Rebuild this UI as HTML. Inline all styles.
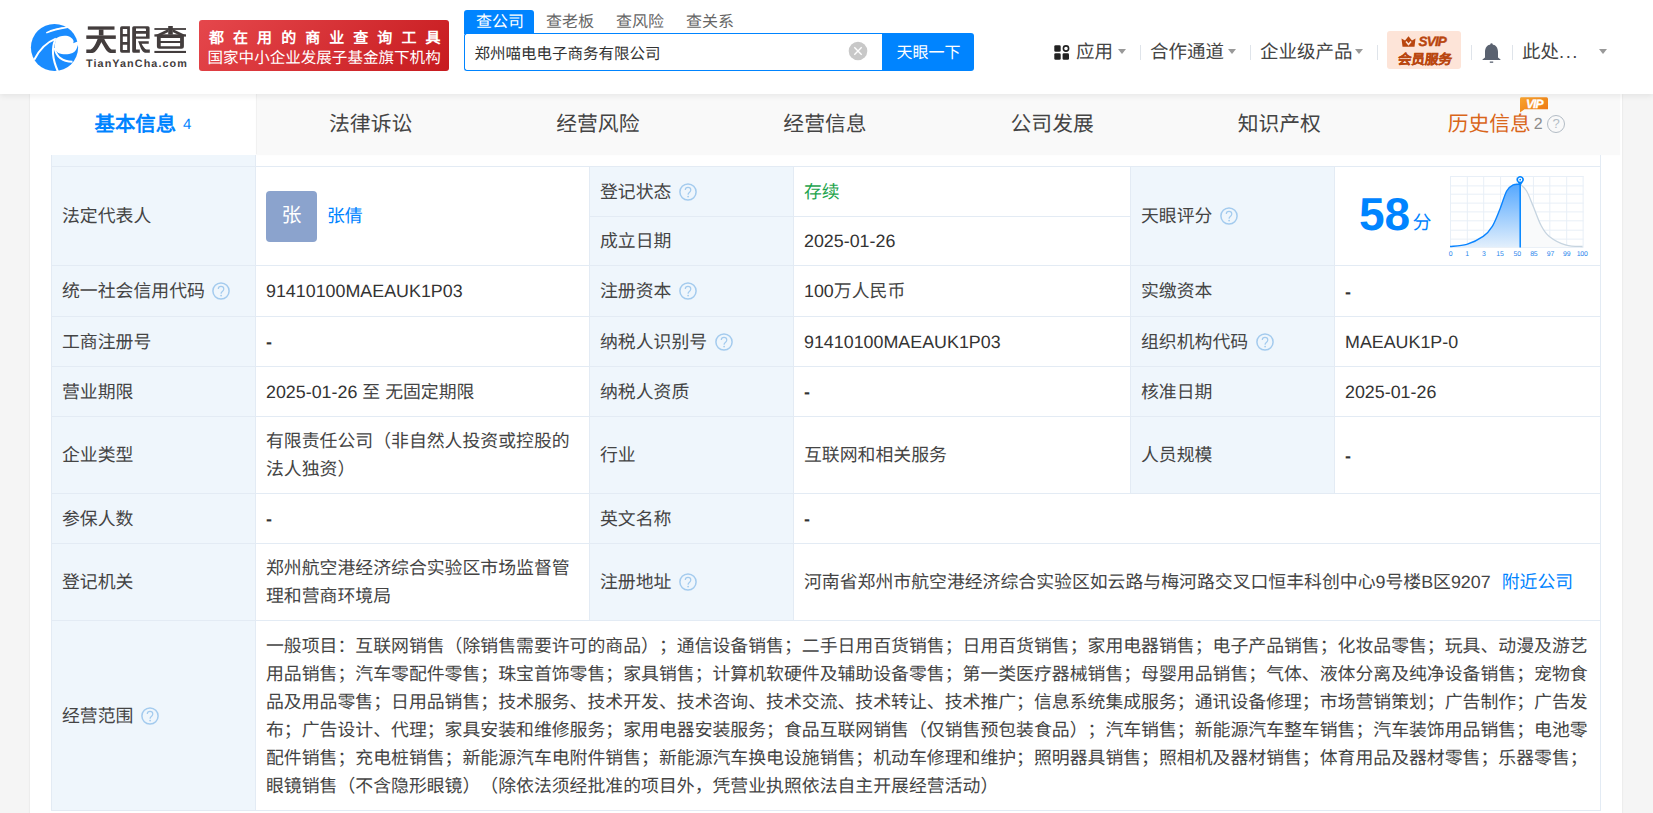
<!DOCTYPE html>
<html lang="zh-CN"><head><meta charset="utf-8">
<style>
*{margin:0;padding:0;box-sizing:border-box}
html,body{width:1653px;height:813px;overflow:hidden}
body{background:#f5f5f5;font-family:"Liberation Sans",sans-serif;color:#333;position:relative;text-rendering:geometricPrecision;text-spacing-trim:space-all}
.abs{position:absolute}
.nw{white-space:nowrap}
#hdr{position:absolute;left:0;top:0;width:1653px;height:94px;background:#fff;box-shadow:0 2px 6px rgba(0,0,0,.075);z-index:5}
#wrap{position:absolute;left:30px;top:94px;width:1592px;height:740px;background:#fff;box-shadow:0 0 2px rgba(0,0,0,.10)}
.tab{position:absolute;top:95px;height:60px;text-align:center;font-size:20.8px;line-height:60px;color:#444;white-space:nowrap}
.c{position:absolute;display:flex;align-items:center;padding:0 10px;font-size:17.87px;line-height:28px;color:#444}
.lab{background:#eff6fc}
.hl{position:absolute;height:1px;background:#e3ebf4}
.vl{position:absolute;width:1px;background:#e3ebf4}
.qi{flex:none;margin-left:6.5px;position:relative;top:0px}
.q{display:inline-block;width:18px;height:18px;border:1.3px solid #a9cdef;border-radius:50%;color:#a9cdef;font-size:13px;line-height:15.5px;text-align:center;margin-left:6px}
.tri{position:absolute;width:0;height:0;border-left:4.8px solid transparent;border-right:4.8px solid transparent;border-top:5.3px solid #999}
.sep{position:absolute;width:1px;height:15px;background:#dfe4ea;top:45px}
.nav{position:absolute;top:38.5px;font-size:18.5px;line-height:26px;color:#444;white-space:nowrap}
</style></head><body>
<div id="hdr">
  <svg class="abs" style="left:28px;top:20px" width="54" height="54" viewBox="0 0 54 54">
    <circle cx="26.5" cy="27.5" r="23.6" fill="#1a8cff"/>
    <path d="M27.9,18.6 C31,16 38,14.5 42.5,17.3 C45.5,19 46.2,21.5 45.2,23.2 L52,20.5 L52,26 L49.8,25.2 C49,29 47.5,31.5 44.5,33 C40,34.8 34,34.5 30.2,32.9 C27.8,31.5 26.4,29 26.6,26.6 Z" fill="#fff"/>
    <path d="M6.2,39.8 C11,30 18,22.5 27.9,18.6" stroke="#fff" stroke-width="2" fill="none"/>
    <path d="M27.2,19.9 C24,27 23.5,37 29.9,51.5" stroke="#fff" stroke-width="2" fill="none"/>
    <path d="M26.6,27.9 C28,36 34,41.5 44.5,41.8" stroke="#fff" stroke-width="2" fill="none"/>
    <path d="M18.3,12.9 C24,9.5 31,7.6 39.8,7.3 C31,8.8 24,10.5 18.3,12.9 Z" stroke="#fff" stroke-width="1.3" fill="#fff"/>
  </svg>
  <svg class="abs" style="left:0;top:0" width="200" height="80" viewBox="0 0 200 80"><g fill="#433d3d">
<rect x="87.8" y="26.4" width="26.7" height="3.3"/>
<rect x="86.3" y="35.4" width="29.5" height="3.5"/>
<rect x="98.85" y="29.5" width="4.6" height="6"/>
<path d="M97.8,38.6 L101.8,38.6 L101.6,41.7 C99.7,45.5 97.6,49.2 95.6,51.3 C94.6,52.4 93.5,53 92.4,53 L86.3,53 L86.3,49.6 L90.6,49.6 C92.8,48.8 95,45.8 97.8,38.6 Z"/>
<path d="M100.8,38.6 L104,38.6 C106,42.5 109,48 111.6,49.6 L115.8,49.6 L115.8,53 L110.3,53 C108.2,52.7 106.6,50.8 105.1,48.5 C103.6,46 102.2,43.6 100.8,41.2 Z"/>
<path fill-rule="evenodd" d="M121.8,26.2 L129.9,26.2 L129.9,52.75 L121.8,52.75 Q120.1,52.75 120.1,51 L120.1,28 Q120.1,26.2 121.8,26.2 Z M122.8,28.9 L127.2,28.9 L127.2,33.9 L122.8,33.9 Z M122.8,36.6 L127.2,36.6 L127.2,41.9 L122.8,41.9 Z M122.8,44.8 L127.2,44.8 L127.2,50 L122.8,50 Z"/>
<path fill-rule="evenodd" d="M133.8,26.2 L148,26.2 Q149.6,26.2 149.6,27.8 L149.6,38.7 L136,38.7 L136,49.4 L139.8,49.4 L139.8,52.75 L133.8,52.75 Q132.2,52.75 132.2,51.2 L132.2,27.8 Q132.2,26.2 133.8,26.2 Z M136,28.5 L145,28.5 Q146,28.5 146,29.6 L146,31 L136,31 Z M136,33.7 L146,33.7 L146,36.6 L136,36.6 Z"/>
<path d="M138.1,41.25 L148.75,41.25 L148.75,43.75 L141.6,43.75 C143,46.5 145,49.2 146.5,49.6 L149.8,49.6 L149.8,52.75 L145,52.75 C143.5,52.5 142.2,51 141,48.8 Z"/>
<rect x="168.2" y="26" width="4.6" height="8.6"/>
<rect x="154.4" y="28.1" width="31.6" height="1.8"/>
<path d="M168.4,29 L168.4,31.9 L160.6,35.8 L155.8,35 Z"/>
<path d="M172.6,29 L172.6,31.9 L180.4,35.8 L185.2,35 Z"/>
<rect x="154.4" y="34.3" width="31.6" height="2.3"/>
<path fill-rule="evenodd" d="M156.9,35.8 L183.9,35.8 L183.9,46.3 Q183.9,48.8 181.4,48.8 L159.4,48.8 Q156.9,48.8 156.9,46.3 Z M160.7,37.9 L180.1,37.9 L180.1,41 L160.7,41 Z M160.7,43.1 L180.1,43.1 L180.1,46.3 L160.7,46.3 Z"/>
<rect x="154.4" y="50.9" width="31.6" height="2.1"/>
</g></svg>
  <div class="abs nw" style="left:86px;top:57px;font-size:10.8px;font-weight:bold;color:#433d3d;line-height:14px;letter-spacing:1.08px">TianYanCha.com</div>
  <div class="abs" style="left:199px;top:20px;width:250px;height:51px;border-radius:3px;background:linear-gradient(135deg,#e5474c,#c71b1f)"></div>
  <div class="abs nw" style="left:209px;top:28.5px;font-size:15px;line-height:20px;color:#fff;font-weight:bold;letter-spacing:9.05px">都在用的商业查询工具</div>
  <div class="abs nw" style="left:207.5px;top:49px;font-size:15.55px;line-height:20px;color:#fff">国家中小企业发展子基金旗下机构</div>

  <div class="abs" style="left:464px;top:10px;width:70px;height:24px;background:#0084ff;border-radius:3px 3px 0 0"></div>
  <div class="abs nw" style="left:476px;top:11.5px;font-size:16px;line-height:22px;color:#fff">查公司</div>
  <div class="abs nw" style="left:546px;top:11.5px;font-size:16px;line-height:22px;color:#666">查老板</div>
  <div class="abs nw" style="left:616px;top:11.5px;font-size:16px;line-height:22px;color:#666">查风险</div>
  <div class="abs nw" style="left:686px;top:11.5px;font-size:16px;line-height:22px;color:#666">查关系</div>
  <div class="abs" style="left:464px;top:33px;width:420px;height:38px;border:1px solid #0084ff;border-right:none;border-radius:3px 0 0 3px"></div>
  <div class="abs nw" style="left:474.5px;top:43.5px;font-size:15.5px;line-height:22px;color:#333">郑州喵电电子商务有限公司</div>
  <svg class="abs" style="left:848px;top:41px" width="20" height="20" viewBox="0 0 20 20"><circle cx="10" cy="10" r="9.3" fill="#c8c8c8"/><path d="M6.3 6.3L13.7 13.7M13.7 6.3L6.3 13.7" stroke="#fff" stroke-width="1.4"/></svg>
  <div class="abs" style="left:882px;top:33px;width:92px;height:38px;background:#0084ff;border-radius:0 3px 3px 0"></div>
  <div class="abs nw" style="left:896.5px;top:42.5px;font-size:16px;line-height:22px;color:#fff">天眼一下</div>

  <svg class="abs" style="left:1054px;top:44.5px" width="16" height="15" viewBox="0 0 16 15">
    <rect x="0.3" y="0.3" width="6.4" height="6.4" rx="1.3" fill="#222"/>
    <circle cx="12" cy="3.5" r="2.6" fill="none" stroke="#222" stroke-width="1.6"/>
    <rect x="0.3" y="8.3" width="6.4" height="6.4" rx="1.3" fill="#222"/>
    <rect x="8.6" y="8.3" width="6.4" height="6.4" rx="1.3" fill="#222"/>
  </svg>
  <div class="nav" style="left:1076px">应用</div>
  <div class="tri" style="left:1117.5px;top:49px"></div>
  <div class="sep" style="left:1140px"></div>
  <div class="nav" style="left:1150px">合作通道</div>
  <div class="tri" style="left:1227.5px;top:49px"></div>
  <div class="sep" style="left:1250px"></div>
  <div class="nav" style="left:1260px">企业级产品</div>
  <div class="tri" style="left:1354.5px;top:49px"></div>
  <div class="sep" style="left:1377px"></div>
  <div class="abs" style="left:1387px;top:31px;width:74px;height:38px;background:#fde4d8;border-radius:3px"></div>
  <svg class="abs" style="left:1401px;top:36px" width="15" height="11" viewBox="0 0 15 11">
    <path d="M0.5,2.5 L4,4.5 L7.5,0.3 L11,4.5 L14.5,2.5 L13.5,10.7 L1.5,10.7 Z" fill="#b9460f"/>
    <path d="M5,5.5 L7.5,8.5 L10,5.5" stroke="#fde4d8" stroke-width="1.5" fill="none"/>
  </svg>
  <div class="abs nw" style="left:1418.5px;top:34px;font-size:13.5px;line-height:15px;color:#b9460f;font-weight:bold;font-style:italic;letter-spacing:-0.8px;-webkit-text-stroke:0.4px #b9460f">SVIP</div>
  <div class="abs nw" style="left:1396.5px;top:50.5px;font-size:13.5px;line-height:17px;color:#b9460f;font-weight:bold;-webkit-text-stroke:0.3px #b9460f;transform:skewX(-6deg);transform-origin:0 100%">会员服务</div>
  <div class="sep" style="left:1471px"></div>
  <svg class="abs" style="left:1482px;top:43px" width="19" height="20" viewBox="0 0 19 20">
    <circle cx="9.5" cy="1.5" r="1.2" fill="#5a6270"/>
    <path d="M9.5,1.5 C5,1.5 3,5 3,9 L3,14.5 L0.5,16.5 L0.5,17 L18.5,17 L18.5,16.5 L16,14.5 L16,9 C16,5 14,1.5 9.5,1.5 Z" fill="#5a6270"/>
    <rect x="7.8" y="18.5" width="3.4" height="1.3" fill="#5a6270"/>
  </svg>
  <div class="sep" style="left:1512px"></div>
  <div class="nav" style="left:1522px">此处<span style="letter-spacing:1.5px">...</span></div>
  <div class="tri" style="left:1599px;top:48.5px"></div>
</div>

<div id="wrap"></div>
<!-- tabs -->
<div class="abs" style="left:256px;top:94px;width:1364px;height:60px;background:#f9f9f9;border-left:1px solid #f1f1f1;box-shadow:0 1px 1px rgba(0,0,0,.025)"></div>
<div class="tab" style="left:30px;width:226px;color:#0084ff;font-weight:bold;font-size:20.4px">基本信息<span style="font-size:15px;font-weight:normal;margin-left:7px;position:relative;top:-2.5px">4</span></div>
<div class="tab" style="left:257.1px;width:227.1px">法律诉讼</div>
<div class="tab" style="left:484.3px;width:227.1px">经营风险</div>
<div class="tab" style="left:711.4px;width:227.1px">经营信息</div>
<div class="tab" style="left:938.6px;width:227.1px">公司发展</div>
<div class="tab" style="left:1165.7px;width:227.1px">知识产权</div>
<div class="tab" style="left:1392.9px;width:227.1px;color:#d9661a">历史信息<span style="font-size:16px;color:#8c8c8c;margin-left:3px;position:relative;top:-2.5px">2</span><span class="q" style="border-color:#b3bcc5;color:#b3bcc5;border-width:1.6px;vertical-align:middle;position:relative;top:-2px;margin-left:4.5px">?</span></div>
<svg class="abs" style="left:1519px;top:97px" width="30" height="16" viewBox="0 0 30 16">
  <defs><linearGradient id="vg" x1="0" y1="0" x2="1" y2="1"><stop offset="0" stop-color="#f9a52f"/><stop offset="1" stop-color="#ec7410"/></linearGradient></defs>
  <path d="M2,0.3 L27.5,0.3 Q29,0.3 29,2 L29,12.3 L5.5,12.3 L1,15.5 L1,2 Q1,0.3 2,0.3 Z" fill="url(#vg)"/>
  <text x="15.3" y="10.8" text-anchor="middle" font-family="Liberation Sans" font-size="12" font-weight="bold" font-style="italic" letter-spacing="-0.9" stroke="#fff" stroke-width="0.3" fill="#fff">VIP</text>
</svg>

<!-- table -->
<div class="abs lab" style="left:51px;top:155px;width:204px;height:11px"></div>
<div class="c lab" style="left:52px;top:167px;width:203px;height:98px">法定代表人</div>
<div class="c" style="left:256px;top:167px;width:333px;height:98px"><span style="display:inline-block;width:51px;height:51px;border-radius:4px;background:#8ba3cd;color:#fff;font-size:20px;line-height:51px;text-align:center;margin-right:10px">张</span><span style="color:#0084ff">张倩</span></div>
<div class="c lab" style="left:590px;top:167px;width:203px;height:49px">登记状态<svg class="qi" width="20" height="20" viewBox="0 0 20 20"><circle cx="10" cy="10" r="8.1" fill="none" stroke="#a4cbee" stroke-width="1.5"/><path d="M7.3,8 C7.3,6.3 8.5,5.4 10,5.4 C11.6,5.4 12.8,6.4 12.8,7.9 C12.8,9.4 11.8,10 11,10.7 C10.4,11.2 10.1,11.7 10.1,12.7" fill="none" stroke="#a4cbee" stroke-width="1.2"/><circle cx="10.1" cy="14.6" r="0.9" fill="#a4cbee"/></svg></div>
<div class="c lab" style="left:590px;top:217px;width:203px;height:48px">成立日期</div>
<div class="c" style="left:794px;top:167px;width:336px;height:49px"><span style="color:#1da44d">存续</span></div>
<div class="c" style="left:794px;top:217px;width:336px;height:48px"><span style="color:#333">2025-01-26</span></div>
<div class="c lab" style="left:1131px;top:167px;width:203px;height:98px">天眼评分<svg class="qi" width="20" height="20" viewBox="0 0 20 20"><circle cx="10" cy="10" r="8.1" fill="none" stroke="#a4cbee" stroke-width="1.5"/><path d="M7.3,8 C7.3,6.3 8.5,5.4 10,5.4 C11.6,5.4 12.8,6.4 12.8,7.9 C12.8,9.4 11.8,10 11,10.7 C10.4,11.2 10.1,11.7 10.1,12.7" fill="none" stroke="#a4cbee" stroke-width="1.2"/><circle cx="10.1" cy="14.6" r="0.9" fill="#a4cbee"/></svg></div>
<div class="c" style="left:1335px;top:167px;width:265px;height:98px"></div>
<div class="c lab" style="left:52px;top:266px;width:203px;height:50px">统一社会信用代码<svg class="qi" width="20" height="20" viewBox="0 0 20 20"><circle cx="10" cy="10" r="8.1" fill="none" stroke="#a4cbee" stroke-width="1.5"/><path d="M7.3,8 C7.3,6.3 8.5,5.4 10,5.4 C11.6,5.4 12.8,6.4 12.8,7.9 C12.8,9.4 11.8,10 11,10.7 C10.4,11.2 10.1,11.7 10.1,12.7" fill="none" stroke="#a4cbee" stroke-width="1.2"/><circle cx="10.1" cy="14.6" r="0.9" fill="#a4cbee"/></svg></div>
<div class="c" style="left:256px;top:266px;width:333px;height:50px"><span style="color:#333">91410100MAEAUK1P03</span></div>
<div class="c lab" style="left:590px;top:266px;width:203px;height:50px">注册资本<svg class="qi" width="20" height="20" viewBox="0 0 20 20"><circle cx="10" cy="10" r="8.1" fill="none" stroke="#a4cbee" stroke-width="1.5"/><path d="M7.3,8 C7.3,6.3 8.5,5.4 10,5.4 C11.6,5.4 12.8,6.4 12.8,7.9 C12.8,9.4 11.8,10 11,10.7 C10.4,11.2 10.1,11.7 10.1,12.7" fill="none" stroke="#a4cbee" stroke-width="1.2"/><circle cx="10.1" cy="14.6" r="0.9" fill="#a4cbee"/></svg></div>
<div class="c" style="left:794px;top:266px;width:336px;height:50px"><span style="color:#333">100</span>万人民币</div>
<div class="c lab" style="left:1131px;top:266px;width:203px;height:50px">实缴资本</div>
<div class="c" style="left:1335px;top:266px;width:265px;height:50px"><span style="color:#333;font-weight:bold;position:relative;top:0.8px">-</span></div>
<div class="c lab" style="left:52px;top:317px;width:203px;height:49px">工商注册号</div>
<div class="c" style="left:256px;top:317px;width:333px;height:49px"><span style="color:#333;font-weight:bold;position:relative;top:0.8px">-</span></div>
<div class="c lab" style="left:590px;top:317px;width:203px;height:49px">纳税人识别号<svg class="qi" width="20" height="20" viewBox="0 0 20 20"><circle cx="10" cy="10" r="8.1" fill="none" stroke="#a4cbee" stroke-width="1.5"/><path d="M7.3,8 C7.3,6.3 8.5,5.4 10,5.4 C11.6,5.4 12.8,6.4 12.8,7.9 C12.8,9.4 11.8,10 11,10.7 C10.4,11.2 10.1,11.7 10.1,12.7" fill="none" stroke="#a4cbee" stroke-width="1.2"/><circle cx="10.1" cy="14.6" r="0.9" fill="#a4cbee"/></svg></div>
<div class="c" style="left:794px;top:317px;width:336px;height:49px"><span style="color:#333">91410100MAEAUK1P03</span></div>
<div class="c lab" style="left:1131px;top:317px;width:203px;height:49px">组织机构代码<svg class="qi" width="20" height="20" viewBox="0 0 20 20"><circle cx="10" cy="10" r="8.1" fill="none" stroke="#a4cbee" stroke-width="1.5"/><path d="M7.3,8 C7.3,6.3 8.5,5.4 10,5.4 C11.6,5.4 12.8,6.4 12.8,7.9 C12.8,9.4 11.8,10 11,10.7 C10.4,11.2 10.1,11.7 10.1,12.7" fill="none" stroke="#a4cbee" stroke-width="1.2"/><circle cx="10.1" cy="14.6" r="0.9" fill="#a4cbee"/></svg></div>
<div class="c" style="left:1335px;top:317px;width:265px;height:49px"><span style="color:#333">MAEAUK1P-0</span></div>
<div class="c lab" style="left:52px;top:367px;width:203px;height:49px">营业期限</div>
<div class="c" style="left:256px;top:367px;width:333px;height:49px"><span style="color:#333">2025-01-26</span>&nbsp;至 无固定期限</div>
<div class="c lab" style="left:590px;top:367px;width:203px;height:49px">纳税人资质</div>
<div class="c" style="left:794px;top:367px;width:336px;height:49px"><span style="color:#333;font-weight:bold;position:relative;top:0.8px">-</span></div>
<div class="c lab" style="left:1131px;top:367px;width:203px;height:49px">核准日期</div>
<div class="c" style="left:1335px;top:367px;width:265px;height:49px"><span style="color:#333">2025-01-26</span></div>
<div class="c lab" style="left:52px;top:417px;width:203px;height:76px">企业类型</div>
<div class="c" style="left:256px;top:417px;width:333px;height:76px"><div>有限责任公司（非自然人投资或控股的<br>法人独资）</div></div>
<div class="c lab" style="left:590px;top:417px;width:203px;height:76px">行业</div>
<div class="c" style="left:794px;top:417px;width:336px;height:76px">互联网和相关服务</div>
<div class="c lab" style="left:1131px;top:417px;width:203px;height:76px">人员规模</div>
<div class="c" style="left:1335px;top:417px;width:265px;height:76px"><span style="color:#333;font-weight:bold;position:relative;top:0.8px">-</span></div>
<div class="c lab" style="left:52px;top:494px;width:203px;height:49px">参保人数</div>
<div class="c" style="left:256px;top:494px;width:333px;height:49px"><span style="color:#333;font-weight:bold;position:relative;top:0.8px">-</span></div>
<div class="c lab" style="left:590px;top:494px;width:203px;height:49px">英文名称</div>
<div class="c" style="left:794px;top:494px;width:806px;height:49px"><span style="color:#333;font-weight:bold;position:relative;top:0.8px">-</span></div>
<div class="c lab" style="left:52px;top:544px;width:203px;height:76px">登记机关</div>
<div class="c" style="left:256px;top:544px;width:333px;height:76px"><div>郑州航空港经济综合实验区市场监督管<br>理和营商环境局</div></div>
<div class="c lab" style="left:590px;top:544px;width:203px;height:76px">注册地址<svg class="qi" width="20" height="20" viewBox="0 0 20 20"><circle cx="10" cy="10" r="8.1" fill="none" stroke="#a4cbee" stroke-width="1.5"/><path d="M7.3,8 C7.3,6.3 8.5,5.4 10,5.4 C11.6,5.4 12.8,6.4 12.8,7.9 C12.8,9.4 11.8,10 11,10.7 C10.4,11.2 10.1,11.7 10.1,12.7" fill="none" stroke="#a4cbee" stroke-width="1.2"/><circle cx="10.1" cy="14.6" r="0.9" fill="#a4cbee"/></svg></div>
<div class="c" style="left:794px;top:544px;width:806px;height:76px">河南省郑州市航空港经济综合实验区如云路与梅河路交叉口恒丰科创中心9号楼B区9207<span style="color:#0084ff;margin-left:11px">附近公司</span></div>
<div class="c lab" style="left:52px;top:621px;width:203px;height:189px">经营范围<svg class="qi" width="20" height="20" viewBox="0 0 20 20"><circle cx="10" cy="10" r="8.1" fill="none" stroke="#a4cbee" stroke-width="1.5"/><path d="M7.3,8 C7.3,6.3 8.5,5.4 10,5.4 C11.6,5.4 12.8,6.4 12.8,7.9 C12.8,9.4 11.8,10 11,10.7 C10.4,11.2 10.1,11.7 10.1,12.7" fill="none" stroke="#a4cbee" stroke-width="1.2"/><circle cx="10.1" cy="14.6" r="0.9" fill="#a4cbee"/></svg></div>
<div class="c" style="left:256px;top:621px;width:1344px;height:189px"><div class="nw">一般项目：互联网销售（除销售需要许可的商品）；通信设备销售；二手日用百货销售；日用百货销售；家用电器销售；电子产品销售；化妆品零售；玩具、动漫及游艺<br>用品销售；汽车零配件零售；珠宝首饰零售；家具销售；计算机软硬件及辅助设备零售；第一类医疗器械销售；母婴用品销售；气体、液体分离及纯净设备销售；宠物食<br>品及用品零售；日用品销售；技术服务、技术开发、技术咨询、技术交流、技术转让、技术推广；信息系统集成服务；通讯设备修理；市场营销策划；广告制作；广告发<br>布；广告设计、代理；家具安装和维修服务；家用电器安装服务；食品互联网销售（仅销售预包装食品）；汽车销售；新能源汽车整车销售；汽车装饰用品销售；电池零<br>配件销售；充电桩销售；新能源汽车电附件销售；新能源汽车换电设施销售；机动车修理和维护；照明器具销售；照相机及器材销售；体育用品及器材零售；乐器零售；<br>眼镜销售（不含隐形眼镜）（除依法须经批准的项目外，凭营业执照依法自主开展经营活动）</div></div>
<div class="hl" style="left:51px;top:166px;width:1550px"></div>

<div class="hl" style="left:51px;top:265px;width:1550px"></div>
<div class="hl" style="left:51px;top:316px;width:1550px"></div>
<div class="hl" style="left:51px;top:366px;width:1550px"></div>
<div class="hl" style="left:51px;top:416px;width:1550px"></div>
<div class="hl" style="left:51px;top:493px;width:1550px"></div>
<div class="hl" style="left:51px;top:543px;width:1550px"></div>
<div class="hl" style="left:51px;top:620px;width:1550px"></div>
<div class="hl" style="left:51px;top:810px;width:1550px"></div>
<div class="hl" style="left:589px;top:216px;width:541px;top:216px"></div>
<div class="vl" style="left:51px;top:155px;height:656px"></div>
<div class="vl" style="left:255px;top:155px;height:656px"></div>
<div class="vl" style="left:589px;top:166px;height:455px"></div>
<div class="vl" style="left:793px;top:166px;height:455px"></div>
<div class="vl" style="left:1130px;top:166px;height:328px"></div>
<div class="vl" style="left:1334px;top:166px;height:328px"></div>
<div class="vl" style="left:1600px;top:155px;height:656px"></div>
<div class="abs nw" style="left:1359px;top:186px;font-size:46px;line-height:56px;font-weight:bold;color:#0084ff">58</div>
<div class="abs nw" style="left:1412.5px;top:210.5px;font-size:19px;line-height:26px;color:#0084ff">分</div>
<svg class="abs" style="left:1450px;top:176px" width="140" height="86" viewBox="0 0 140 86" overflow="visible">
<defs><linearGradient id="fg" x1="0" y1="0" x2="0" y2="1"><stop offset="0" stop-color="#55a8ff"/><stop offset="1" stop-color="#e2effc"/></linearGradient></defs>
<g stroke="#e8eff7" stroke-width="1" fill="none"><line x1="0.5" y1="0" x2="0.5" y2="71"/><line x1="17.3" y1="0" x2="17.3" y2="71"/><line x1="33.7" y1="0" x2="33.7" y2="71"/><line x1="50.6" y1="0" x2="50.6" y2="71"/><line x1="66.6" y1="0" x2="66.6" y2="71"/><line x1="83.4" y1="0" x2="83.4" y2="71"/><line x1="99.8" y1="0" x2="99.8" y2="71"/><line x1="116.7" y1="0" x2="116.7" y2="71"/><line x1="133.1" y1="0" x2="133.1" y2="71"/><line x1="0" y1="0.5" x2="133.5" y2="0.5"/><line x1="0" y1="9.9" x2="133.5" y2="9.9"/><line x1="0" y1="18.2" x2="133.5" y2="18.2"/><line x1="0" y1="27.1" x2="133.5" y2="27.1"/><line x1="0" y1="35.9" x2="133.5" y2="35.9"/><line x1="0" y1="44.8" x2="133.5" y2="44.8"/><line x1="0" y1="54.2" x2="133.5" y2="54.2"/><line x1="0" y1="63.1" x2="133.5" y2="63.1"/><line x1="0" y1="71.4" x2="133.5" y2="71.4"/></g>
<path d="M70.20,8.30 C71.27,9.42 74.42,11.30 76.60,15.00 C78.78,18.70 80.90,24.78 83.30,30.50 C85.70,36.22 88.33,44.32 91.00,49.30 C93.67,54.28 95.10,57.08 99.30,60.40 C103.50,63.72 110.65,67.52 116.20,69.20 C121.75,70.88 129.87,70.28 132.60,70.50 L132.6,71 L70.2,71 Z" fill="#f9fafb"/>
<path d="M0.00,70.50 C2.80,70.13 11.27,69.98 16.80,68.30 C22.33,66.62 28.95,63.38 33.20,60.40 C37.45,57.42 39.48,55.02 42.30,50.40 C45.12,45.78 47.70,38.60 50.10,32.70 C52.50,26.80 54.50,18.97 56.70,15.00 C58.90,11.03 61.05,10.02 63.30,8.90 C65.55,7.78 69.05,8.40 70.20,8.30 L70.2,71 L0,71 Z" fill="url(#fg)"/>
<path d="M0.00,70.50 C2.80,70.13 11.27,69.98 16.80,68.30 C22.33,66.62 28.95,63.38 33.20,60.40 C37.45,57.42 39.48,55.02 42.30,50.40 C45.12,45.78 47.70,38.60 50.10,32.70 C52.50,26.80 54.50,18.97 56.70,15.00 C58.90,11.03 61.05,10.02 63.30,8.90 C65.55,7.78 69.05,8.40 70.20,8.30" stroke="#0a84ff" stroke-width="1.4" fill="none"/>
<path d="M70.20,8.30 C71.27,9.42 74.42,11.30 76.60,15.00 C78.78,18.70 80.90,24.78 83.30,30.50 C85.70,36.22 88.33,44.32 91.00,49.30 C93.67,54.28 95.10,57.08 99.30,60.40 C103.50,63.72 110.65,67.52 116.20,69.20 C121.75,70.88 129.87,70.28 132.60,70.50" stroke="#c6d4e0" stroke-width="1.3" fill="none"/>
<line x1="70.2" y1="8" x2="70.2" y2="71.5" stroke="#0084ff" stroke-width="1.5"/>
<path d="M70.2,10 L67.3,5.8 A3.6,3.6 0 1 1 73.1,5.8 Z" fill="#0084ff"/><circle cx="70.2" cy="3.7" r="2.1" fill="#fff"/><circle cx="70.2" cy="3.7" r="0.9" fill="#0084ff"/>
<text x="0.5" y="80.2" text-anchor="middle" font-family="Liberation Sans" font-size="6.9" letter-spacing="-0.2" fill="#2a86ec">0</text><text x="17.0" y="80.2" text-anchor="middle" font-family="Liberation Sans" font-size="6.9" letter-spacing="-0.2" fill="#2a86ec">1</text><text x="33.7" y="80.2" text-anchor="middle" font-family="Liberation Sans" font-size="6.9" letter-spacing="-0.2" fill="#2a86ec">3</text><text x="50.0" y="80.2" text-anchor="middle" font-family="Liberation Sans" font-size="6.9" letter-spacing="-0.2" fill="#2a86ec">15</text><text x="67.2" y="80.2" text-anchor="middle" font-family="Liberation Sans" font-size="6.9" letter-spacing="-0.2" fill="#2a86ec">50</text><text x="83.8" y="80.2" text-anchor="middle" font-family="Liberation Sans" font-size="6.9" letter-spacing="-0.2" fill="#2a86ec">85</text><text x="100.4" y="80.2" text-anchor="middle" font-family="Liberation Sans" font-size="6.9" letter-spacing="-0.2" fill="#2a86ec">97</text><text x="116.7" y="80.2" text-anchor="middle" font-family="Liberation Sans" font-size="6.9" letter-spacing="-0.2" fill="#2a86ec">99</text><text x="132.2" y="80.2" text-anchor="middle" font-family="Liberation Sans" font-size="6.9" letter-spacing="-0.2" fill="#2a86ec">100</text>
</svg>
</body></html>
